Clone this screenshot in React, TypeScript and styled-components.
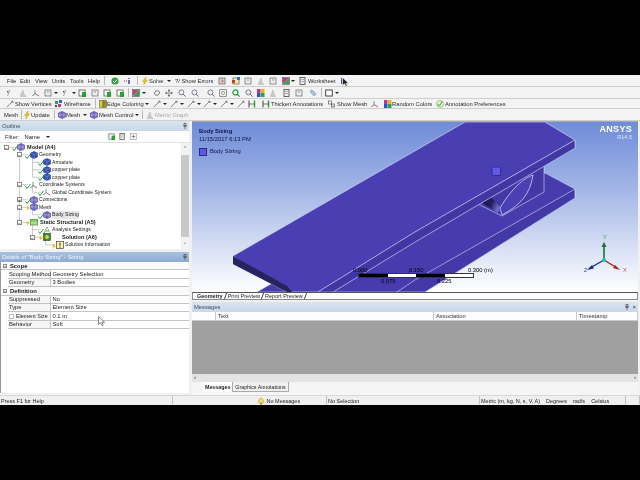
import React from 'react'
import styled, { createGlobalStyle } from 'styled-components'

const GlobalStyle = createGlobalStyle`
  html, body { margin: 0; padding: 0; background: #000; }
  * { box-sizing: border-box; }
`

type IconName =
  | 'check' | 'dots' | 'bolt' | 'help' | 'doc' | 'docGreen' | 'docRed' | 'color' | 'sheet' | 'probe'
  | 'cube' | 'arrows' | 'move' | 'zoom' | 'zoomGreen' | 'frame' | 'edge' | 'vertex' | 'wire' | 'yellow'
  | 'mesh' | 'graph' | 'triad' | 'random' | 'annot' | 'thicken' | 'showMesh' | 'warn' | 'square' | 'tag' | 'box'

const Icon = ({ name, size = 8 }: { name: IconName; size?: number }) => {
  const art: Record<IconName, React.ReactNode> = {
    check: <><circle cx="4" cy="4" r="3.6" fill="#2f9e44" /><path d="M2 4l1.5 1.6L6 2.6" stroke="#fff" fill="none" /></>,
    dots: <><path d="M0 4h3" stroke="#a12a7c" strokeDasharray="1 1" /><path d="M5 1v1M5 3v4" stroke="#1b3fa8" strokeWidth="1.4" /></>,
    bolt: <path d="M5 0L1.5 4.5h2L2.5 8 6.5 3h-2z" fill="#f0c419" stroke="#a88a10" strokeWidth=".4" />,
    help: <><rect x="1" y="1" width="6" height="6" fill="#ddd" stroke="#555" strokeWidth=".7" /><path d="M3 3h2v2H3" stroke="#d33" fill="none" strokeWidth=".7" /></>,
    doc: <><rect x="1" y="1" width="6" height="6" fill="#eee" stroke="#666" strokeWidth=".7" /><path d="M3 3h2" stroke="#666" strokeWidth=".7" /></>,
    docGreen: <><rect x="1" y="1" width="6" height="6" fill="#fff" stroke="#555" strokeWidth=".8" /><rect x="4" y="3" width="4" height="5" fill="#22a52c" /></>,
    docRed: <><rect x="1" y="1" width="6" height="6" fill="#fbeeb0" stroke="#666" strokeWidth=".8" /><rect x="0" y="3" width="3" height="3" fill="#d8342c" /><rect x="5" y="0" width="3" height="3" fill="#2a6fd0" /></>,
    color: <><rect x="0.5" y="0.5" width="7" height="7" fill="#fff" stroke="#555" strokeWidth=".7" /><path d="M1 7L7 1v6z" fill="#30a84a" /><path d="M1 7V1h6z" fill="#c43d8b" /></>,
    sheet: <><rect x="1" y="0.5" width="5" height="7" fill="#eee" stroke="#444" strokeWidth=".8" /><path d="M2 2.5h3M2 4.5h3" stroke="#888" strokeWidth=".6" /></>,
    probe: <path d="M1 1h1v6H1zM4 3l3 3-1 1z" fill="#3559b5" />,
    cube: <><path d="M4 .5L7.5 2v4L4 7.5.5 6V2z" fill="#3451b0" stroke="#20306f" strokeWidth=".5" /><path d="M.8 2L4 3.5 7.2 2M4 3.5v4" stroke="#9cb0ea" strokeWidth=".4" fill="none" /></>,
    arrows: <path d="M1.5 5A3 3 0 0 1 6.5 2.5M6.5 3A3 3 0 0 1 1.5 5.5" stroke="#555" fill="none" strokeWidth=".8" />,
    move: <path d="M4 .5v7M.5 4h7M4 .5L3 2h2zM4 7.5L3 6h2zM.5 4L2 3v2zM7.5 4L6 3v2z" stroke="#666" fill="#666" strokeWidth=".5" />,
    zoom: <><circle cx="3.4" cy="3.4" r="2.5" fill="#eef" stroke="#666" strokeWidth=".8" /><path d="M5.2 5.2L7.6 7.6" stroke="#666" /></>,
    zoomGreen: <><circle cx="3.4" cy="3.4" r="2.5" fill="#fff" stroke="#1f9c3a" strokeWidth="1.2" /><path d="M5.2 5.2L7.6 7.6" stroke="#1f9c3a" strokeWidth="1.2" /></>,
    frame: <><rect x="0.7" y="0.7" width="6.6" height="6.6" fill="#f4f4f4" stroke="#666" strokeWidth=".7" /><circle cx="4" cy="4" r="1.6" fill="none" stroke="#666" strokeWidth=".6" /></>,
    edge: <path d="M.8 7L6.5 1.5M5.2 1.2h1.800V3" stroke="#555" fill="none" strokeWidth=".7" />,
    vertex: <><rect x="1" y="2" width="1.5" height="1.5" fill="#555" /><path d="M4 .5L1.5 7" stroke="#777" strokeWidth=".6" /></>,
    wire: <><rect x="0" y="1" width="3" height="3" fill="#2fa04b" /><rect x="3" y="4" width="3" height="3" fill="#c53a8e" /><rect x="4" y="0" width="3" height="3" fill="#2d64c8" /><rect x="0" y="5" width="2" height="2" fill="#444" /></>,
    yellow: <><rect x="0.5" y="0.5" width="3.5" height="7" fill="#d7cf1f" stroke="#555" strokeWidth=".5" /><rect x="4" y="0.5" width="3.5" height="7" fill="#8f8f25" stroke="#555" strokeWidth=".5" /></>,
    mesh: <><path d="M4 .5L7.5 2v4L4 7.5.5 6V2z" fill="#7167c4" stroke="#2a2678" strokeWidth=".5" /><path d="M2 1.3v5.4M6 1.3v5.4M.5 4h7" stroke="#ddd" strokeWidth=".4" /></>,
    graph: <path d="M1 7.5L4 1l1 4 2 2.5z" fill="#c9c9c9" stroke="#aaa" strokeWidth=".4" />,
    triad: <><path d="M3 4.5V1" stroke="#25a244" strokeWidth=".8" /><path d="M3 4.5L.5 7" stroke="#2040b0" strokeWidth=".8" /><path d="M3 4.5L7 7" stroke="#c22f2f" strokeWidth=".8" /></>,
    random: <><rect x="0" y="0" width="3.5" height="4" fill="#c9338c" /><rect x="4" y="0" width="3.5" height="4" fill="#e6b720" /><rect x="0" y="4" width="3.5" height="4" fill="#2b58c8" /><rect x="4" y="4" width="3.5" height="4" fill="#2fa04b" /></>,
    annot: <><circle cx="4" cy="4" r="3.4" fill="#eef6e6" stroke="#6fae3e" strokeWidth=".7" /><path d="M2 4l1.5 2L6 1.5" stroke="#3c9a2c" fill="none" /></>,
    thicken: <><path d="M1 .5v7" stroke="#444" /><path d="M6.5 .5v7" stroke="#22a52c" strokeWidth="1.4" /><path d="M1 4h5.5" stroke="#444" strokeWidth=".7" /></>,
    showMesh: <><rect x="0.5" y="1" width="3" height="3" fill="#fff" stroke="#444" strokeWidth=".6" /><rect x="3.5" y="4" width="3" height="3" fill="#ddd" stroke="#444" strokeWidth=".6" /></>,
    warn: <><path d="M2 6a2.5 3 0 1 1 4 0z" fill="#f4df5c" stroke="#a38f1d" strokeWidth=".5" /><rect x="3" y="6" width="2" height="1.6" fill="#888" /></>,
    square: <rect x="0.7" y="1" width="6.6" height="6" fill="#fff" stroke="#333" strokeWidth=".9" />,
    tag: <path d="M1 2.5L3 .8l4.2 4.2-2 2z" fill="#a9c4e2" stroke="#6a87a8" strokeWidth=".6" />,
    box: <><rect x="0.5" y="0.5" width="7" height="7" fill="#f6f6f6" stroke="#999" strokeWidth=".7" /><path d="M2 4h4M4 2v4" stroke="#555" strokeWidth=".7" /></>,
  }
  return <svg width={size} height={size} viewBox="0 0 8 8">{art[name]}</svg>
}

const PinIcon = () => (
  <svg width="4" height="6" viewBox="0 0 4 6"><path d="M1 .5h2v2.500H1zM.2 3h3.600M2 3v3" stroke="#444" strokeWidth=".7" fill="none" /></svg>
)

type ToolItem =
  | { x: number; icon: IconName }
  | { x: number; caret: true }
  | { x: number; sep: true }
  | { x: number; label: string; muted?: boolean; icon?: undefined }

const menuRow: ToolItem[] = [
  { x: 7, label: 'File' }, { x: 20, label: 'Edit' }, { x: 35, label: 'View' }, { x: 52, label: 'Units' },
  { x: 70, label: 'Tools' }, { x: 88, label: 'Help' }, { x: 104, sep: true }, { x: 111, icon: 'check' },
  { x: 124, icon: 'dots' }, { x: 137, sep: true }, { x: 141, icon: 'bolt' }, { x: 149, label: 'Solve' },
  { x: 167, caret: true }, { x: 175, label: '?/ Show Errors' }, { x: 218, icon: 'help' }, { x: 232, icon: 'docRed' },
  { x: 244, icon: 'doc' }, { x: 257, icon: 'graph' }, { x: 269, icon: 'doc' }, { x: 282, icon: 'color' },
  { x: 291, caret: true }, { x: 299, icon: 'sheet' }, { x: 308, label: 'Worksheet' }, { x: 340, icon: 'probe' },
]

const viewRow: ToolItem[] = [
  { x: 6, icon: 'vertex' }, { x: 19, icon: 'graph' }, { x: 32, icon: 'triad' }, { x: 44, icon: 'doc' }, { x: 54, caret: true },
  { x: 62, icon: 'vertex' }, { x: 72, caret: true }, { x: 78, icon: 'docGreen' }, { x: 91, icon: 'doc' }, { x: 103, icon: 'docGreen' },
  { x: 116, icon: 'docGreen' }, { x: 128, sep: true }, { x: 132, icon: 'color' }, { x: 142, caret: true }, { x: 153, icon: 'arrows' },
  { x: 165, icon: 'move' }, { x: 178, icon: 'zoom' }, { x: 191, icon: 'zoom' }, { x: 207, icon: 'zoom' }, { x: 219, icon: 'frame' },
  { x: 232, icon: 'zoomGreen' }, { x: 245, icon: 'zoom' }, { x: 257, icon: 'random' }, { x: 269, icon: 'graph' }, { x: 283, icon: 'sheet' },
  { x: 295, icon: 'doc' }, { x: 309, icon: 'tag' }, { x: 321, sep: true }, { x: 325, icon: 'square' }, { x: 335, caret: true },
]

const annotationRow: ToolItem[] = [
  { x: 6, icon: 'edge' }, { x: 15, label: 'Show Vertices' }, { x: 55, icon: 'wire' }, { x: 64, label: 'Wireframe' },
  { x: 95, sep: true }, { x: 99, icon: 'yellow' }, { x: 107, label: 'Edge Coloring' }, { x: 145, caret: true },
  { x: 153, icon: 'edge' }, { x: 163, caret: true }, { x: 170, icon: 'edge' }, { x: 180, caret: true }, { x: 187, icon: 'edge' },
  { x: 197, caret: true }, { x: 203, icon: 'edge' }, { x: 213, caret: true }, { x: 220, icon: 'edge' }, { x: 230, caret: true },
  { x: 237, icon: 'edge' }, { x: 248, icon: 'thicken' }, { x: 262, icon: 'thicken' }, { x: 271, label: 'Thicken Annotations' },
  { x: 328, icon: 'showMesh' }, { x: 337, label: 'Show Mesh' }, { x: 371, icon: 'triad' }, { x: 384, icon: 'random' },
  { x: 392, label: 'Random Colors' }, { x: 436, icon: 'annot' }, { x: 445, label: 'Annotation Preferences' },
]

const meshRow: ToolItem[] = [
  { x: 4, label: 'Mesh' }, { x: 21, sep: true }, { x: 23, icon: 'bolt' }, { x: 31, label: 'Update' }, { x: 54, sep: true },
  { x: 58, icon: 'mesh' }, { x: 66, label: 'Mesh' }, { x: 83, caret: true }, { x: 90, icon: 'mesh' }, { x: 99, label: 'Mesh Control' },
  { x: 135, caret: true }, { x: 142, sep: true }, { x: 146, icon: 'graph' }, { x: 155, label: 'Metric Graph', muted: true },
]

const Toolbar = ({ items, $height }: { items: ToolItem[]; $height: number }) => (
  <ToolRow $height={$height}>
    {items.map((item, i) => {
      const next = items[i + 1]
      const start = i === 0 ? 0 : item.x
      const width = next ? next.x - start : undefined
      return (
        <ToolCell key={i} $w={width} $pad={i === 0 ? item.x : 0}>
          {'label' in item && <ToolLabel $muted={item.muted}>{item.label}</ToolLabel>}
          {'icon' in item && item.icon && <Icon name={item.icon} />}
          {'caret' in item && <Caret />}
          {'sep' in item && <ToolSep />}
        </ToolCell>
      )
    })}
  </ToolRow>
)

type TreeItem = {
  label: string
  x: number
  iconX: number
  icon: React.ReactNode
  status: 'ok' | 'bolt'
  bold?: boolean
  selected?: boolean
  toggle?: { x: number; sign: string }
}

const folderIcon = (
  <svg width="8" height="8" viewBox="0 0 8 8"><rect x="0.5" y="1.5" width="7" height="5.5" fill="#a5e08a" stroke="#3a8a2a" strokeWidth=".7" /><path d="M.5 3h7" stroke="#3a8a2a" strokeWidth=".5" /></svg>
)
const solutionIcon = (
  <svg width="8" height="8" viewBox="0 0 8 8"><rect x="0.5" y="0.5" width="7" height="7" fill="#2b8a3e" stroke="#1c4e26" strokeWidth=".6" /><circle cx="4" cy="4" r="2" fill="#e8cf2d" /></svg>
)
const infoIcon = (
  <svg width="8" height="8" viewBox="0 0 8 8"><rect x="0.5" y="0.5" width="7" height="7" fill="#fbf3a0" stroke="#444" strokeWidth=".7" /><path d="M4 1.7v3M4 5.6v1" stroke="#222" strokeWidth="1" /></svg>
)
const settingsIcon = (
  <svg width="8" height="8" viewBox="0 0 8 8"><path d="M1 7L4 1l3 6" stroke="#6d6d6d" strokeDasharray="1 .7" fill="none" /><path d="M2 5h4" stroke="#6aa84f" /></svg>
)

const treeItems: TreeItem[] = [
  { label: 'Model (A4)', x: 27, iconX: 17, icon: <Icon name="mesh" />, status: 'ok', bold: true, toggle: { x: 4, sign: '−' } },
  { label: 'Geometry', x: 39, iconX: 30, icon: <Icon name="cube" />, status: 'ok', toggle: { x: 17, sign: '−' } },
  { label: 'Armature', x: 52, iconX: 43, icon: <Icon name="cube" />, status: 'ok' },
  { label: 'copper plate', x: 52, iconX: 43, icon: <Icon name="cube" />, status: 'ok' },
  { label: 'copper plate', x: 52, iconX: 43, icon: <Icon name="cube" />, status: 'ok' },
  { label: 'Coordinate Systems', x: 39, iconX: 30, icon: <Icon name="triad" />, status: 'ok', toggle: { x: 17, sign: '−' } },
  { label: 'Global Coordinate System', x: 52, iconX: 43, icon: <Icon name="triad" />, status: 'ok' },
  { label: 'Connections', x: 39, iconX: 30, icon: <Icon name="mesh" />, status: 'ok', toggle: { x: 17, sign: '+' } },
  { label: 'Mesh', x: 39, iconX: 30, icon: <Icon name="mesh" />, status: 'bolt', toggle: { x: 17, sign: '−' } },
  { label: 'Body Sizing', x: 52, iconX: 43, icon: <Icon name="mesh" />, status: 'ok', selected: true },
  { label: 'Static Structural (A5)', x: 40, iconX: 30, icon: folderIcon, status: 'bolt', bold: true, toggle: { x: 17, sign: '−' } },
  { label: 'Analysis Settings', x: 52, iconX: 43, icon: settingsIcon, status: 'ok' },
  { label: 'Solution (A6)', x: 62, iconX: 43, icon: solutionIcon, status: 'bolt', bold: true, toggle: { x: 30, sign: '−' } },
  { label: 'Solution Information', x: 65, iconX: 56, icon: infoIcon, status: 'bolt' },
]

const detailRows: { kind: 'group' | 'row' | 'sub'; name: string; value?: string; open?: boolean }[] = [
  { kind: 'group', name: 'Scope' },
  { kind: 'row', name: 'Scoping Method', value: 'Geometry Selection' },
  { kind: 'row', name: 'Geometry', value: '3 Bodies' },
  { kind: 'group', name: 'Definition' },
  { kind: 'row', name: 'Suppressed', value: 'No' },
  { kind: 'row', name: 'Type', value: 'Element Size' },
  { kind: 'sub', name: 'Element Size', value: '0.1 m' },
  { kind: 'row', name: 'Behavior', value: 'Soft' },
]

const Geometry = () => (
  <SceneSvg viewBox="192 122 446 170" preserveAspectRatio="none">
    <defs>
      <linearGradient id="hole" x1="0" y1="0" x2="1" y2="0.4">
        <stop offset="0" stopColor="#191845" />
        <stop offset="0.6" stopColor="#23205e" />
        <stop offset="1" stopColor="#6f6ad0" />
      </linearGradient>
    </defs>
    {/* lower plate */}
    <path d="M545 173L575 189V198L425 292H257L400 210Z" fill="#463cae" stroke="#c8cdf0" strokeWidth=".6" />
    <path d="M575 189L415 280L397 292H425L575 198Z" fill="#4238a6" stroke="#d8dcf5" strokeWidth=".6" />
    {/* web between plates */}
    <path d="M544 160V192L502 216L470 200Z" fill="#4238a6" stroke="#d8dcf5" strokeWidth=".6" />
    <path d="M533 175C524 178 512 188 500 208L502 215C520 205 530 195 533 175Z" fill="#4a40b4" stroke="#e4e6f8" strokeWidth=".7" />
    <path d="M482 203L491 197L500 207L498 213Z" fill="url(#hole)" />
    {/* top plate */}
    <path d="M233 264L287 292H333L415 242L575 148V140L415 232L318 292H300L233 256Z" fill="#3d349c" stroke="#d4d8f2" strokeWidth=".5" />
    <path d="M465 122H545L575 140L415 232L318 292H287L233 256Z" fill="#4a3fb2" stroke="#dfe2f7" strokeWidth=".6" />
    <path d="M233 256L287 286L292 292H287L233 264Z" fill="#26245f" />
    <path d="M318 292L415 232L575 140V148L415 242L333 292Z" fill="#4037a4" stroke="#d4d8f2" strokeWidth=".5" />
    <rect x="492" y="167" width="8.500" height="8.500" rx="1" fill="#6258ea" stroke="#241f70" strokeWidth=".7" />
    {/* triad */}
    <path d="M604 260V245" stroke="#137a2a" strokeWidth="1.600" />
    <path d="M604 242L601.500 247H606.500Z" fill="#137a2a" />
    <path d="M604 260L590 268" stroke="#1a2a9a" strokeWidth="1.400" />
    <path d="M587 270L592 265L594 268.500Z" fill="#1a2a9a" />
    <path d="M604 260L617 268" stroke="#a42323" strokeWidth="1.400" />
    <path d="M620 270L613 268L615 265Z" fill="#a42323" />
    <circle cx="604" cy="260" r="2" fill="#19c3c3" />
  </SceneSvg>
)

const App = () => (
  <>
    <GlobalStyle />
    <Screen>
      <Window>
        <Toolbar items={menuRow} $height={12} />
        <Toolbar items={viewRow} $height={12} />
        <Toolbar items={annotationRow} $height={10} />
        <Toolbar items={meshRow} $height={12} />
        <Workspace>
          <LeftColumn>
            <PanelHeader>Outline<PinGroup><PinIcon /></PinGroup></PanelHeader>
            <FilterBar>
              <FilterLabel>Filter:</FilterLabel>
              <FilterValue>Name</FilterValue>
              <Caret />
              <FilterIcons>
                <Icon name="docGreen" size={7} />
                <Icon name="sheet" size={7} />
                <Icon name="box" size={7} />
              </FilterIcons>
            </FilterBar>
            <TreePane>
              <TreeList>
                <TreeLines width="180" height="106" viewBox="0 0 180 106">
                  <path d="M6.500 4.250H16M19.500 4.250V79.250M19.500 11.750H28M19.500 41.750H28M19.500 56.750H28M19.500 64.250H28M19.500 79.250H28M32.500 12V34.250M32.500 19.250H41M32.500 26.750H41M32.500 34.250H41M32.500 42V49.250H41M32.500 64.250V71.750H41M32.500 79.250V94.250M32.500 86.750H41M32.500 94.250H41M45.500 94.250V101.750H54" fill="none" stroke="#a8a8a8" strokeWidth=".6" />
                </TreeLines>
                {treeItems.map((item, i) => (
                  <TreeRow key={i}>
                    {item.toggle && <Toggle $x={item.toggle.x}>{item.toggle.sign}</Toggle>}
                    <StatusMark $x={item.iconX - 5}>
                      {item.status === 'ok' ? (
                        <svg width="6" height="6" viewBox="0 0 6 6"><path d="M.5 3.500L2 5.500 5.500 1" stroke="#1f9c2e" fill="none" /></svg>
                      ) : (
                        <svg width="6" height="6" viewBox="0 0 6 6"><path d="M3.500 0L1 3.500h1.500L1.500 6 5 2.500H3.500z" fill="#e1c31b" /></svg>
                      )}
                    </StatusMark>
                    <TreeGlyph $x={item.iconX}>{item.icon}</TreeGlyph>
                    <TreeLabel $x={item.x} $bold={item.bold} $selected={item.selected}>{item.label}</TreeLabel>
                  </TreeRow>
                ))}
              </TreeList>
              <VScroll>
                <ScrollArrow>⌃</ScrollArrow>
                <ScrollThumb />
                <ScrollArrow>⌄</ScrollArrow>
              </VScroll>
            </TreePane>
            <DetailsHeader>Details of "Body Sizing" - Sizing<PinGroup><PinIcon /></PinGroup></DetailsHeader>
            <DetailsPane>
              {detailRows.map((row, i) =>
                row.kind === 'group' ? (
                  <GroupRow key={i}>
                    <GroupToggle>−</GroupToggle>
                    <GroupName>{row.name}</GroupName>
                  </GroupRow>
                ) : (
                  <PropRow key={i}>
                    <PropName $sub={row.kind === 'sub'}>
                      {row.kind === 'sub' && <CheckBox />}
                      {row.name}
                    </PropName>
                    <PropValue>{row.value}</PropValue>
                  </PropRow>
                )
              )}
              <Cursor $x={97} $y={54}><PointerSvg /></Cursor>
            </DetailsPane>
          </LeftColumn>
          <RightColumn>
            <Viewport>
              <Geometry />
              <Stamp>
                <StampTitle>Body Sizing</StampTitle>
                <StampLine>11/15/2017 6:13 PM</StampLine>
                <Legend><Swatch />Body Sizing</Legend>
              </Stamp>
              <Brand>
                <BrandName>ANSYS</BrandName>
                <BrandVersion>R14.5</BrandVersion>
              </Brand>
              <ScaleBar>
                {[0, 1, 2, 3].map((n) => <ScaleSegment key={n} $dark={n % 2 === 0} />)}
                <ScaleText $x={-6} $up>0.000</ScaleText>
                <ScaleText $x={50} $up>0.150</ScaleText>
                <ScaleText $x={109} $up>0.300 (m)</ScaleText>
                <ScaleText $x={22}>0.075</ScaleText>
                <ScaleText $x={78}>0.225</ScaleText>
              </ScaleBar>
              <AxisLabel $x={411} $y={112} $color="#2c9a44">Y</AxisLabel>
              <AxisLabel $x={392} $y={145} $color="#3040c0">Z</AxisLabel>
              <AxisLabel $x={431} $y={145} $color="#cf4a5a">X</AxisLabel>
            </Viewport>
            <ViewTabs>
              <ViewTab $active>Geometry</ViewTab>
              <ViewTab>Print Preview</ViewTab>
              <ViewTab>Report Preview</ViewTab>
            </ViewTabs>
            <PanelHeader>Messages<PinGroup><PinIcon />×</PinGroup></PanelHeader>
            <MessageColumns>
              <ColumnHead $w={24} />
              <ColumnHead $w={218}>Text</ColumnHead>
              <ColumnHead $w={143}>Association</ColumnHead>
              <ColumnHead>Timestamp</ColumnHead>
            </MessageColumns>
            <MessageBody />
            <HScroll><span>‹</span><span>›</span></HScroll>
            <BottomTabs>
              <BottomTab $active>Messages</BottomTab>
              <BottomTab>Graphics Annotations</BottomTab>
            </BottomTabs>
          </RightColumn>
        </Workspace>
        <StatusBar>
          <StatusCell $w={173}>Press F1 for Help</StatusCell>
          <StatusCell $w={154} $pad={84}><Icon name="warn" />&nbsp;No Messages</StatusCell>
          <StatusCell $w={153}>No Selection</StatusCell>
          <StatusCell $w={146}>
            Metric (m, kg, N, s, V, A)
            <StatusGap>Degrees</StatusGap>
            <StatusGap>rad/s</StatusGap>
            <StatusGap>Celsius</StatusGap>
          </StatusCell>
          <StatusCell />
        </StatusBar>
        <Cursor $x={342} $y={2}><PointerSvg dark /></Cursor>
      </Window>
    </Screen>
  </>
)

const PointerSvg = ({ dark }: { dark?: boolean }) => (
  <svg width="7" height="10" viewBox="0 0 7 10">
    <path d="M.5.5v8l2-1.800L4 9.500l1.200-.6L4 6.300h2.600z" fill={dark ? '#222' : '#f4f4f4'} stroke={dark ? '#eee' : '#444'} strokeWidth=".6" />
  </svg>
)

export default App

const Screen = styled.div`
  width: 640px;
  height: 480px;
  padding: 75px 0;
  background: #000;
  overflow: hidden;
  font-family: 'Liberation Sans', Arial, sans-serif;
  font-size: 5.8px;
  color: #222;
`

const Window = styled.div`
  position: relative;
  height: 330px;
  display: flex;
  flex-direction: column;
  background: #f0f0f0;
  filter: blur(0.4px);
`

const ToolRow = styled.div<{ $height: number }>`
  height: ${(p) => p.$height}px;
  display: flex;
  align-items: center;
  border-bottom: 1px solid #cfcfcf;
  background: #f3f3f3;
  flex: none;
`

const ToolCell = styled.div<{ $w?: number; $pad: number }>`
  width: ${(p) => (p.$w ? `${p.$w}px` : 'auto')};
  padding-left: ${(p) => p.$pad}px;
  flex: none;
  display: flex;
  align-items: center;
  white-space: nowrap;
`

const ToolLabel = styled.span<{ $muted?: boolean }>`
  color: ${(p) => (p.$muted ? '#a8a8a8' : '#2a2a2a')};
`

const Caret = styled.span`
  width: 0;
  height: 0;
  border-left: 2px solid transparent;
  border-right: 2px solid transparent;
  border-top: 2px solid #222;
`

const ToolSep = styled.span`
  width: 1px;
  height: 9px;
  background: #b9b9b9;
`

const Workspace = styled.div`
  flex: 1;
  min-height: 0;
  display: flex;
`

const LeftColumn = styled.div`
  width: 192px;
  flex: none;
  display: flex;
  flex-direction: column;
  padding-right: 3px;
`

const RightColumn = styled.div`
  flex: 1;
  min-width: 0;
  display: flex;
  flex-direction: column;
  padding-right: 2px;
`

const PanelHeader = styled.div`
  height: 10px;
  flex: none;
  display: flex;
  align-items: center;
  justify-content: space-between;
  padding: 0 2px;
  background: linear-gradient(#dbe4f0, #c9d7e8);
  color: #3d4a5c;
`

const DetailsHeader = styled(PanelHeader)`
  margin-top: 3px;
  background: linear-gradient(#a9c1e0, #8fabd2);
  color: #f2f6fb;
`

const PinGroup = styled.span`
  display: flex;
  align-items: center;
  gap: 3px;
  color: #333;
  font-size: 6px;
`

const FilterBar = styled.div`
  height: 12px;
  flex: none;
  display: flex;
  align-items: center;
  gap: 4px;
  padding-left: 5px;
  background: #fff;
  border-bottom: 1px solid #e2e2e2;
`

const FilterLabel = styled.span`
  color: #333;
`

const FilterValue = styled.span`
  margin-left: 1px;
  width: 17px;
`

const FilterIcons = styled.span`
  display: flex;
  gap: 4px;
  margin-left: 54px;
`

const TreePane = styled.div`
  height: 106px;
  flex: none;
  display: flex;
  background: #fff;
`

const TreeList = styled.div`
  position: relative;
  flex: 1;
  min-width: 0;
  padding-top: 0.5px;
`

const TreeLines = styled.svg`
  position: absolute;
  left: 0;
  top: 0;
`

const TreeRow = styled.div`
  position: relative;
  height: 7.5px;
`

const Toggle = styled.span<{ $x: number }>`
  position: absolute;
  left: ${(p) => p.$x}px;
  top: 1px;
  width: 5px;
  height: 5px;
  border: 0.5px solid #888;
  background: #fff;
  font-size: 5px;
  line-height: 4px;
  text-align: center;
`

const StatusMark = styled.span<{ $x: number }>`
  position: absolute;
  left: ${(p) => p.$x}px;
  top: 1.5px;
  line-height: 0;
`

const TreeGlyph = styled.span<{ $x: number }>`
  position: absolute;
  left: ${(p) => p.$x}px;
  top: -0.5px;
  line-height: 0;
`

const TreeLabel = styled.span<{ $x: number; $bold?: boolean; $selected?: boolean }>`
  position: absolute;
  left: ${(p) => p.$x}px;
  top: 0;
  line-height: 7.5px;
  font-size: ${(p) => (p.$bold ? 5.6 : 5.1)}px;
  font-weight: ${(p) => (p.$bold ? 700 : 400)};
  background: ${(p) => (p.$selected ? '#e6e6e6' : 'transparent')};
  white-space: nowrap;
`

const VScroll = styled.div`
  width: 8px;
  display: flex;
  flex-direction: column;
  align-items: center;
  background: #f2f2f2;
`

const ScrollArrow = styled.span`
  height: 12px;
  font-size: 5px;
  line-height: 10px;
  color: #444;
`

const ScrollThumb = styled.div`
  flex: 1;
  width: 100%;
  background: #c9c9c9;
`

const DetailsPane = styled.div`
  position: relative;
  flex: 1;
  margin-bottom: 2px;
  background: #fff;
  border-left: 1px solid #999;
`

const GroupRow = styled.div`
  height: 8.4px;
  display: flex;
  align-items: center;
  border-bottom: 1px solid #c4c4c4;
  background: #fafafa;
`

const GroupToggle = styled.span`
  width: 4px;
  height: 4px;
  margin: 0 3px 0 2px;
  border: 0.5px solid #888;
  font-size: 4px;
  line-height: 3px;
  text-align: center;
`

const GroupName = styled.span`
  font-weight: 700;
`

const PropRow = styled.div`
  height: 8.4px;
  margin-left: 7px;
  display: grid;
  grid-template-columns: 43px 1fr;
  border-bottom: 1px solid #c4c4c4;
`

const PropName = styled.div<{ $sub?: boolean }>`
  display: flex;
  align-items: center;
  gap: 2px;
  padding-left: 1px;
  border-right: 1px solid #c4c4c4;
  background: #f6f6f6;
  white-space: nowrap;
  line-height: 7px;
  font-size: ${(p) => (p.$sub ? 5.4 : 5.8)}px;
`

const PropValue = styled.div`
  display: flex;
  align-items: center;
  padding-left: 1.500px;
  line-height: 7px;
`

const CheckBox = styled.span`
  width: 5px;
  height: 5px;
  border: 0.5px solid #bbb;
  background: #fff;
`

const Cursor = styled.span<{ $x: number; $y: number }>`
  position: absolute;
  left: ${(p) => p.$x}px;
  top: ${(p) => p.$y}px;
  line-height: 0;
`

const Viewport = styled.div`
  position: relative;
  height: 171px;
  flex: none;
  overflow: hidden;
  border-top: 1px solid #aaa;
  background: linear-gradient(#6f8cd8 0%, #a3b6e6 40%, #ffffff 100%);
`

const SceneSvg = styled.svg`
  position: absolute;
  inset: 0;
  width: 100%;
  height: 100%;
`

const Stamp = styled.div`
  position: absolute;
  left: 7px;
  top: 6px;
  color: #10153a;
  line-height: 7.5px;
`

const StampTitle = styled.div`
  font-weight: 700;
`

const StampLine = styled.div``

const Legend = styled.div`
  display: flex;
  align-items: center;
  gap: 3px;
  margin-top: 5px;
`

const Swatch = styled.span`
  width: 8px;
  height: 8px;
  background: #5f56e8;
  border: 1px solid #2d2a80;
`

const Brand = styled.div`
  position: absolute;
  right: 6px;
  top: 2px;
  text-align: right;
  color: #fff;
`

const BrandName = styled.div`
  font-size: 9px;
  font-weight: 700;
  letter-spacing: 0.3px;
  line-height: 10px;
`

const BrandVersion = styled.div`
  font-size: 5.500px;
  line-height: 7px;
  color: #dfe6f7;
`

const ScaleBar = styled.div`
  position: absolute;
  left: 166px;
  top: 151px;
  display: flex;
  border: 0.5px solid #333;
`

const ScaleSegment = styled.span<{ $dark: boolean }>`
  width: 28.500px;
  height: 3px;
  background: ${(p) => (p.$dark ? '#000' : '#fff')};
`

const ScaleText = styled.span<{ $x: number; $up?: boolean }>`
  position: absolute;
  left: ${(p) => p.$x}px;
  top: ${(p) => (p.$up ? -7 : 4)}px;
  line-height: 6px;
  color: #000;
  white-space: nowrap;
`

const AxisLabel = styled.span<{ $x: number; $y: number; $color: string }>`
  position: absolute;
  left: ${(p) => p.$x}px;
  top: ${(p) => p.$y}px;
  font-size: 5.500px;
  line-height: 6px;
  color: ${(p) => p.$color};
`

const ViewTabs = styled.div`
  height: 8px;
  flex: none;
  margin-bottom: 2px;
  display: flex;
  padding-left: 4px;
  gap: 5px;
  font-size: 5.5px;
  background: #fff;
  border: 1px solid #8a8a8a;
  border-top-color: #555;
  align-items: center;
`

const ViewTab = styled.span<{ $active?: boolean }>`
  position: relative;
  font-weight: ${(p) => (p.$active ? 700 : 400)};
  line-height: 6px;
  &::after {
    content: '';
    position: absolute;
    right: -3px;
    top: 0;
    height: 6px;
    border-right: 0.5px solid #444;
    transform: skewX(-20deg);
  }
`

const MessageColumns = styled.div`
  height: 9px;
  flex: none;
  display: flex;
  background: #fdfdfd;
  border-bottom: 1px solid #c8c8c8;
`

const ColumnHead = styled.div<{ $w?: number }>`
  width: ${(p) => (p.$w ? `${p.$w}px` : 'auto')};
  flex: ${(p) => (p.$w ? 'none' : 1)};
  padding-left: 2px;
  border-right: 1px solid #c8c8c8;
  line-height: 8px;
  color: #333;
`

const MessageBody = styled.div`
  height: 53px;
  flex: none;
  background: #a0a0a0;
`

const HScroll = styled.div`
  height: 8px;
  flex: none;
  display: flex;
  justify-content: space-between;
  padding: 0 2px;
  background: #e3e3e3;
  line-height: 7px;
`

const BottomTabs = styled.div`
  flex: 1;
  display: flex;
  align-items: flex-start;
  padding-left: 11px;
  font-size: 5.3px;
  background: #f5f5f5;
`

const BottomTab = styled.span<{ $active?: boolean }>`
  height: 10px;
  padding: 0 2px;
  line-height: 10px;
  font-weight: ${(p) => (p.$active ? 700 : 400)};
  background: ${(p) => (p.$active ? '#fff' : '#f0f0f0')};
  border: ${(p) => (p.$active ? 'none' : '0.5px solid #aaa')};
  border-top: none;
`

const StatusBar = styled.div`
  height: 10px;
  flex: none;
  display: flex;
  font-size: 5.5px;
  background: #efefef;
  border-top: 1px solid #d8d8d8;
`

const StatusCell = styled.div<{ $w?: number; $pad?: number }>`
  width: ${(p) => (p.$w ? `${p.$w}px` : 'auto')};
  flex: ${(p) => (p.$w ? 'none' : 1)};
  display: flex;
  align-items: center;
  padding-left: ${(p) => p.$pad ?? 1}px;
  border-right: 1px solid #c2c2c2;
  white-space: nowrap;
`

const StatusGap = styled.span`
  margin-left: 6px;
`
